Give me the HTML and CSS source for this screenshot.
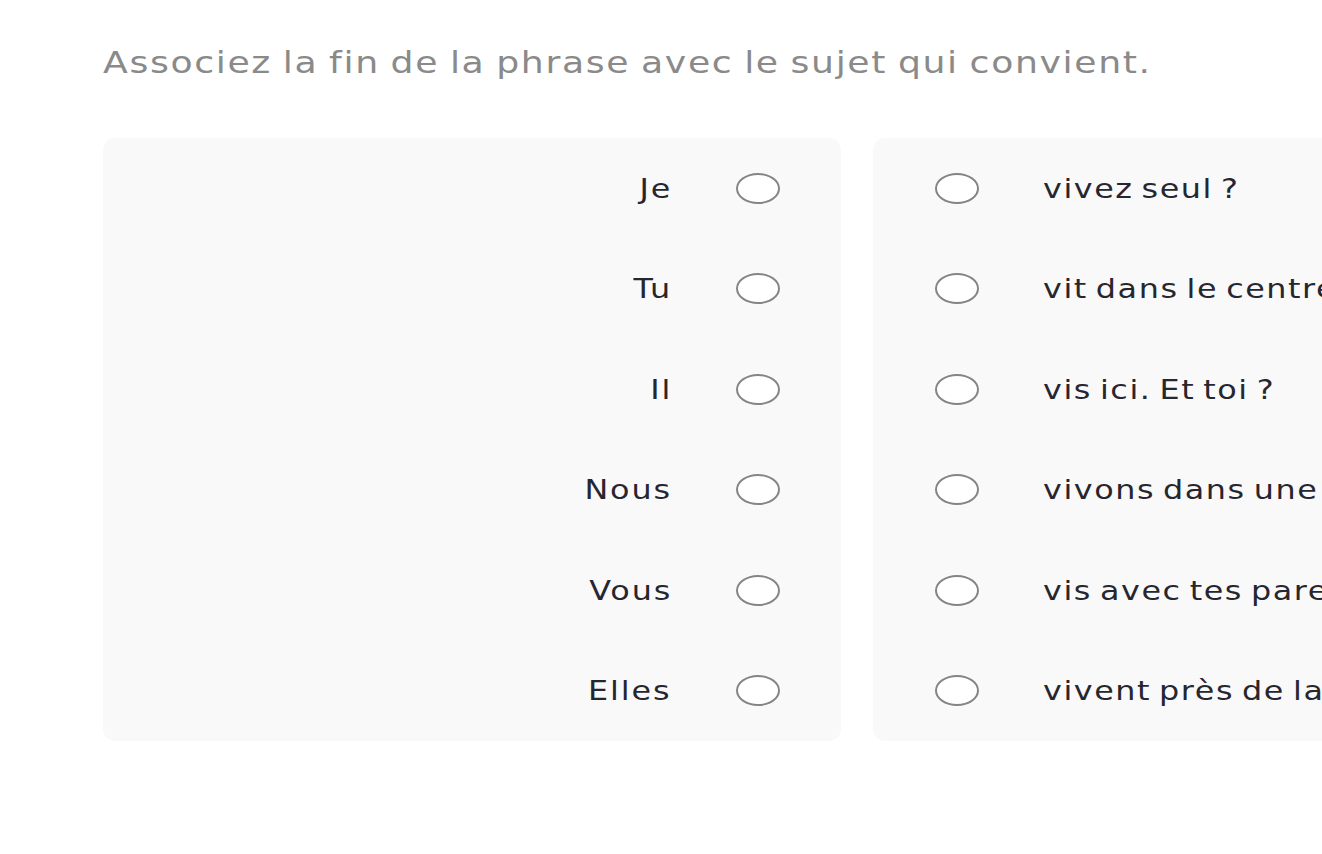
FILE: index.html
```html
<!DOCTYPE html>
<html lang="fr">
<head>
<meta charset="utf-8">
<title>Associez</title>
<link rel="stylesheet" href="styles.css">
</head>
<body>
<main class="page">
  <h1 class="title"><span class="wide wide-left">Associez la fin de la phrase avec le sujet qui convient.</span></h1>
  <div class="board">
    <section class="panel panel-left">
      <div class="row"><span class="word wide wide-right">Je</span><span class="dot"></span></div>
      <div class="row"><span class="word wide wide-right">Tu</span><span class="dot"></span></div>
      <div class="row"><span class="word wide wide-right">Il</span><span class="dot"></span></div>
      <div class="row"><span class="word wide wide-right">Nous</span><span class="dot"></span></div>
      <div class="row"><span class="word wide wide-right">Vous</span><span class="dot"></span></div>
      <div class="row"><span class="word wide wide-right">Elles</span><span class="dot"></span></div>
    </section>
    <section class="panel panel-right">
      <div class="row"><span class="dot"></span><span class="word wide wide-left">vivez seul ?</span></div>
      <div class="row"><span class="dot"></span><span class="word wide wide-left">vit dans le centre-ville.</span></div>
      <div class="row"><span class="dot"></span><span class="word wide wide-left">vis ici. Et toi ?</span></div>
      <div class="row"><span class="dot"></span><span class="word wide wide-left">vivons dans une maison.</span></div>
      <div class="row"><span class="dot"></span><span class="word wide wide-left">vis avec tes parents ?</span></div>
      <div class="row"><span class="dot"></span><span class="word wide wide-left">vivent près de la gare.</span></div>
    </section>
  </div>
</main>
</body>
</html>
```

FILE: styles.css
```css
html, body {
  margin: 0;
  padding: 0;
  background: #ffffff;
  overflow: hidden;
}
body {
  width: 1322px;
  height: 854px;
  font-family: "DejaVu Sans", "Noto Sans", sans-serif;
}
.page {
  padding: 38px 0 0 103px;
}
.title {
  margin: 0;
  font-size: 31px;
  font-weight: 400;
  line-height: 48px;
  color: #8a8a8a;
  letter-spacing: 1.4px;
  word-spacing: -2px;
  white-space: nowrap;
}
.wide {
  display: inline-block;
}
.title .wide {
  transform: scaleX(1.168);
}
.wide-left {
  transform-origin: left center;
}
.wide-right {
  transform-origin: right center;
}
.board {
  margin-top: 52px;
  display: grid;
  grid-template-columns: 738px 738px;
  column-gap: 32px;
}
.panel {
  background: #f9f9f9;
  border-radius: 12px;
  display: flex;
  flex-direction: column;
  overflow: hidden;
}
.row {
  height: 100.5px;
  display: flex;
  align-items: center;
  gap: 64px;
}
.panel-left .row {
  justify-content: flex-end;
  padding-right: 61px;
}
.panel-right .row {
  padding-left: 62px;
}
.word {
  font-size: 26.5px;
  color: #26262f;
  letter-spacing: 1.3px;
  word-spacing: -3px;
  white-space: nowrap;
  transform: scaleX(1.2);
}
.panel-left .word {
  letter-spacing: 1.6px;
}
.dot {
  flex: none;
  width: 40px;
  height: 27px;
  border: 2px solid #858585;
  border-radius: 50%;
  background: #ffffff;
}
```
